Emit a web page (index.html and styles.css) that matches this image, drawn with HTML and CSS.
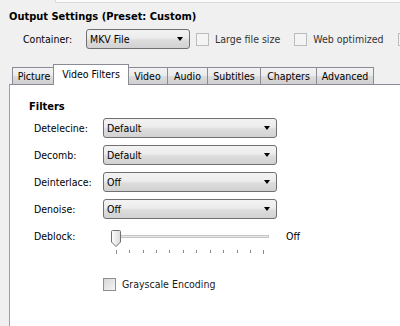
FILE: index.html
```html
<!DOCTYPE html>
<html>
<head>
<meta charset="utf-8">
<link rel="stylesheet" href="styles.css">
</head>
<body>
<div class="topstrip"></div>
<div class="title">Output Settings (Preset: Custom)</div>
<div class="container-row">
  <span class="lbl">Container:</span>
  <div class="select sel-container"><span class="val">MKV File</span><i class="arrow"></i></div>
  <div class="chk disabled"><span class="box"></span><span>Large file size</span></div>
  <div class="chk disabled"><span class="box"></span><span>Web optimized</span></div>
  <div class="chk disabled"><span class="box"></span></div>
</div>
<div class="tabs">
  <div class="tab t-picture">Picture</div>
  <div class="tab active t-filters">Video Filters</div>
  <div class="tab t-video">Video</div>
  <div class="tab t-audio">Audio</div>
  <div class="tab t-subs">Subtitles</div>
  <div class="tab t-chap">Chapters</div>
  <div class="tab t-adv">Advanced</div>
</div>
<div class="panel">
  <div class="section-title">Filters</div>
  <div class="grid">
    <span class="rlabel">Detelecine:</span>
    <div class="select"><span class="val">Default</span><i class="arrow"></i></div>
    <span></span>
    <span class="rlabel">Decomb:</span>
    <div class="select"><span class="val">Default</span><i class="arrow"></i></div>
    <span></span>
    <span class="rlabel">Deinterlace:</span>
    <div class="select"><span class="val">Off</span><i class="arrow"></i></div>
    <span></span>
    <span class="rlabel">Denoise:</span>
    <div class="select"><span class="val">Off</span><i class="arrow"></i></div>
    <span></span>
    <span class="rlabel">Deblock:</span>
    <div class="slider">
      <svg width="174" height="28" viewBox="0 0 174 28">
        <defs>
          <linearGradient id="tg" x1="0" y1="0" x2="1" y2="0">
            <stop offset="0" stop-color="#fdfdfd"/>
            <stop offset="1" stop-color="#dadada"/>
          </linearGradient>
        </defs>
        <rect x="12.5" y="7.5" width="153" height="2" fill="#e9e9e9" stroke="#c4c4c4"/>
        <line x1="13" y1="10.5" x2="166" y2="10.5" stroke="#ffffff"/>
        <g stroke="#8a8a8a" stroke-width="1">
          <line x1="13.5" y1="22" x2="13.5" y2="26"/>
          <line x1="26.5" y1="22" x2="26.5" y2="25"/>
          <line x1="40.5" y1="22" x2="40.5" y2="25"/>
          <line x1="53.5" y1="22" x2="53.5" y2="25"/>
          <line x1="66.5" y1="22" x2="66.5" y2="25"/>
          <line x1="80.5" y1="22" x2="80.5" y2="25"/>
          <line x1="93.5" y1="22" x2="93.5" y2="25"/>
          <line x1="107.5" y1="22" x2="107.5" y2="25"/>
          <line x1="120.5" y1="22" x2="120.5" y2="25"/>
          <line x1="134.5" y1="22" x2="134.5" y2="25"/>
          <line x1="147.5" y1="22" x2="147.5" y2="25"/>
          <line x1="160.5" y1="22" x2="160.5" y2="26"/>
        </g>
        <path d="M9.5 2.5 h7 a1 1 0 0 1 1 1 v10.5 l-4.5 4.5 l-4.5 -4.5 v-10.5 a1 1 0 0 1 1 -1 z" fill="url(#tg)" stroke="#707070"/>
      </svg>
    </div>
    <span class="sval">Off</span>
  </div>
  <div class="chk gray"><span class="box"></span><span>Grayscale Encoding</span></div>
</div>
</body>
</html>
```

FILE: styles.css
```css
html, body {
  margin: 0;
  padding: 0;
}
body {
  width: 400px;
  height: 326px;
  overflow: hidden;
  background: #f0f0f0;
  font-family: "DejaVu Sans Condensed", "DejaVu Sans", sans-serif;
  font-size: 10.5px;
  line-height: 13px;
  color: #000;
}
.topstrip {
  margin-left: 55px;
  height: 2px;
  background: #fbfbfb;
  border-left: 1px solid #d9d9d9;
  border-bottom: 1px solid #d9d9d9;
}
.title {
  margin: 7px 0 0 9px;
  font-weight: bold;
  font-size: 11px;
  height: 13px;
}
.container-row {
  margin-top: 6px;
  height: 20px;
  display: flex;
  align-items: center;
  white-space: nowrap;
  overflow: hidden;
}
.lbl {
  margin-left: 23px;
  width: 63px;
  flex-shrink: 0;
}
.select {
  box-sizing: border-box;
  height: 20px;
  border: 1px solid #707070;
  border-radius: 3px;
  background: linear-gradient(#f3f3f3 0%, #ececec 45%, #dddddd 55%, #d2d2d2 100%);
  display: flex;
  align-items: center;
  padding-left: 3px;
  flex-shrink: 0;
}
.select .val {
  flex: 1;
}
.arrow {
  width: 0;
  height: 0;
  border-left: 3.5px solid transparent;
  border-right: 3.5px solid transparent;
  border-top: 4px solid #000;
  margin-right: 6px;
}
.sel-container {
  width: 104px;
}
.chk {
  display: flex;
  align-items: center;
  gap: 6px;
  color: #1a1a1a;
  white-space: nowrap;
  flex-shrink: 0;
}
.chk .box {
  box-sizing: border-box;
  width: 13px;
  height: 13px;
  flex-shrink: 0;
  border: 1px solid #8e8f8f;
  background: linear-gradient(135deg, #d6d6d6, #f6f6f6);
}
.container-row .chk {
  margin-left: 6px;
}
.container-row .chk + .chk {
  margin-left: 14px;
}
.chk.disabled .box {
  border-color: #bcbcbc;
  background: #f4f4f4;
}
.chk.disabled {
  color: #333;
}
.tabs {
  margin-top: 15px;
  margin-left: 12px;
  height: 21px;
  display: flex;
  align-items: flex-end;
  position: relative;
  z-index: 1;
}
.tab {
  box-sizing: border-box;
  height: 18px;
  border: 1px solid #898c95;
  margin-right: -1px;
  background: linear-gradient(#f2f2f2 0%, #ebebeb 50%, #dddddd 50%, #cfcfcf 100%);
  padding: 2px 0 0 0;
  text-align: center;
  white-space: nowrap;
}
.tab.active {
  height: 21px;
  background: #fff;
  border-bottom: none;
  margin-left: -2px;
  margin-right: -2px;
  position: relative;
  z-index: 2;
  padding-top: 3px;
}
.t-picture { width: 44px; }
.t-filters { width: 76px; }
.t-video { width: 41px; }
.t-audio { width: 41px; }
.t-subs { width: 54px; }
.t-chap { width: 57px; }
.t-adv { width: 58px; }
.panel {
  margin-top: -1px;
  margin-left: 9px;
  height: 241px;
  background: #fff;
  border-left: 1px solid #a0a0a0;
  border-top: 1px solid #898c95;
}
.section-title {
  font-weight: bold;
  font-size: 11px;
  margin: 15px 0 0 19px;
}
.grid {
  margin: 5px 0 0 24px;
  display: grid;
  grid-template-columns: 69px 174px auto;
  grid-auto-rows: 20px;
  row-gap: 7px;
  column-gap: 0;
  align-items: center;
}
.rlabel {
  white-space: nowrap;
}
.slider {
  height: 20px;
}
.slider svg {
  display: block;
  margin-top: 2px;
}
.sval {
  margin-left: 9px;
}
.chk.gray {
  margin: 32px 0 0 93px;
}
```
